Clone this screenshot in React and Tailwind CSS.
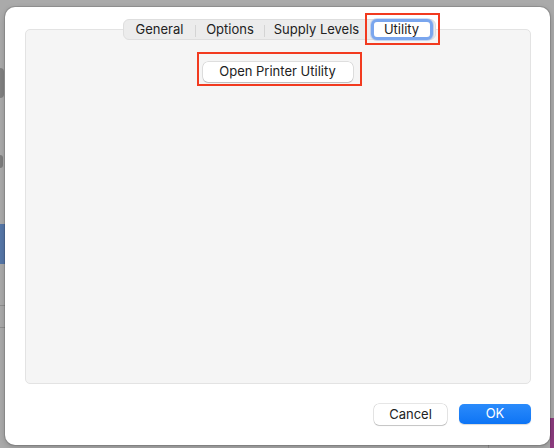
const TABS = [
  { label: "General", w: "w-[72px]" },
  { label: "Options", w: "w-[69px]" },
  { label: "Supply Levels", w: "w-[104px]" },
  { label: "Utility", w: "w-[66px]", active: true },
];

function Tab({ tab, last, nextActive }) {
  if (tab.active) {
    return (
      <div className={`relative ${tab.w} h-full flex items-center justify-center`}>
        <div className="absolute left-[2px] right-[2px] -top-[1px] -bottom-[1px] rounded-[6px] bg-white border-[3px] border-[#7aa6ee] shadow-[0_0_0_1px_rgba(120,160,230,0.35)]" />
        <span className="relative">{tab.label}</span>
        {/* red highlight */}
        <div className="absolute -left-[4px] -right-[5px] -top-[7px] -bottom-[6px] border-2 border-[#f23a1f]" />
      </div>
    );
  }
  return (
    <div className={`relative ${tab.w} h-full flex items-center justify-center`}>
      <span>{tab.label}</span>
      {!last && !nextActive && (
        <div className="absolute right-0 top-[5px] h-[12px] w-px bg-[#d4d4d4]" />
      )}
    </div>
  );
}

export default function App() {
  return (
    <div
      className="relative w-[554px] h-[448px] bg-[#aaaaaa] overflow-hidden text-[13px] text-[#222222] pl-[5px] pt-[7px]"
      style={{ fontFamily: "Inter, 'Liberation Sans', sans-serif" }}
    >
      {/* desktop bits peeking out behind the sheet */}
      <div className="absolute left-0 top-[68px] w-[4px] h-[30px] bg-[#808080] rounded-r" />
      <div className="absolute left-0 top-[155px] w-[3px] h-[13px] bg-[#7d7d7d] rounded-r" />
      <div className="absolute left-0 top-[224px] w-[5px] h-[40px] bg-[#5677a8]" />
      <div className="absolute left-0 top-[305px] w-[5px] h-px bg-[#8f8f8f]" />
      <div className="absolute left-0 top-[327px] w-[5px] h-px bg-[#8f8f8f]" />
      <div className="absolute right-0 top-[418px] w-[4px] h-[30px] bg-[#8c3b7e]" />
      <div className="absolute left-[488px] top-[440px] w-px h-[8px] bg-[#909090]" />

      {/* sheet */}
      <div className="relative w-[545px] h-[438px] bg-white rounded-[10px] shadow-[0_0_0_1px_rgba(0,0,0,0.12),0_2px_6px_rgba(0,0,0,0.2)] flex flex-col pl-[20px] pr-[19px] pt-[12px]">
        {/* segmented control */}
        <div className="relative z-10 self-center ml-[2px] flex h-[21px] rounded-[6px] bg-[#ececec] border border-[#dedede]">
          {TABS.map((t, i) => (
            <Tab
              key={t.label}
              tab={t}
              last={i === TABS.length - 1}
              nextActive={TABS[i + 1]?.active}
            />
          ))}
        </div>

        {/* tab content panel */}
        <div className="-mt-[11px] h-[355px] rounded-[5px] bg-[#f5f5f5] border border-[#e3e3e3] flex flex-col items-center pt-[22px]">
          <div className="border-2 border-[#f23a1f] pl-[4px] pr-[7px] pt-[8px] pb-[2px] ml-[2px]">
            <button className="w-[150px] h-[20px] rounded-[5px] bg-white shadow-[0_0_0_0.5px_rgba(0,0,0,0.18),0_1px_1px_rgba(0,0,0,0.15)]">
              Open Printer Utility
            </button>
          </div>
        </div>

        {/* footer buttons */}
        <div className="flex justify-end gap-[12px] mt-[20px]">
          <button className="w-[73px] h-[21px] rounded-[5px] bg-white shadow-[0_0_0_0.5px_rgba(0,0,0,0.2),0_1px_1px_rgba(0,0,0,0.15)]">
            Cancel
          </button>
          <button className="w-[72px] h-[20px] rounded-[5px] bg-gradient-to-b from-[#2a8bfb] to-[#0c74f5] text-white shadow-[0_1px_1px_rgba(0,0,0,0.15)]">
            OK
          </button>
        </div>
      </div>
    </div>
  );
}
